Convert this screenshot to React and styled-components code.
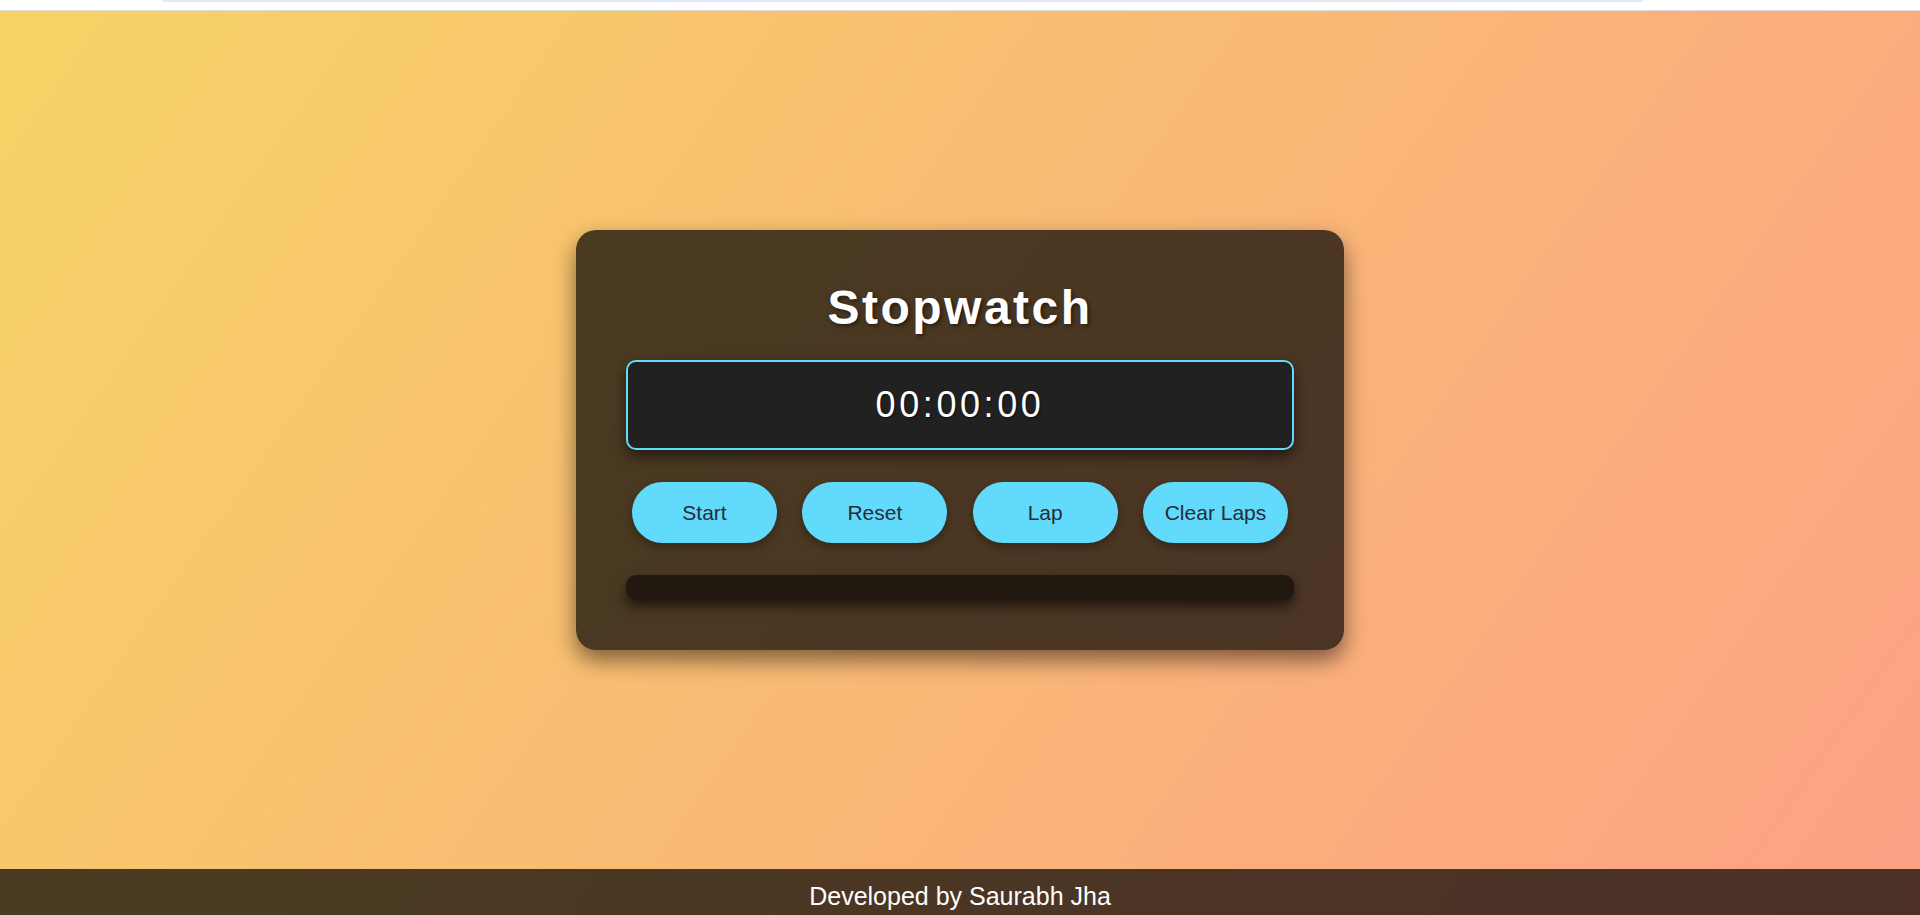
import { useState } from 'react'
import styled, { createGlobalStyle } from 'styled-components'

const GlobalStyle = createGlobalStyle`
	html, body {
		margin: 0;
		padding: 0;
	}
	body {
		font-family: 'Liberation Sans', Arial, sans-serif;
		background: linear-gradient(125deg, #f6d365 0%, #fda085 100%);
		min-height: 100vh;
	}
	* {
		box-sizing: border-box;
	}
`

function pad(n) {
	return String(n).padStart(2, '0')
}

function formatTime(ms) {
	const totalSec = Math.floor(ms / 1000)
	const h = Math.floor(totalSec / 3600)
	const m = Math.floor((totalSec % 3600) / 60)
	const s = totalSec % 60
	return `${pad(h)}:${pad(m)}:${pad(s)}`
}

function App() {
	const [time, setTime] = useState(0)
	const [laps, setLaps] = useState([])

	const buttons = [
		{ label: 'Start', onClick: () => {} },
		{ label: 'Reset', onClick: () => setTime(0) },
		{ label: 'Lap', onClick: () => setLaps([...laps, time]) },
		{ label: 'Clear Laps', onClick: () => setLaps([]) },
	]

	return (
		<>
			<GlobalStyle />
			<TopStrip>
				<TopBar />
			</TopStrip>
			<Main>
				<Card>
					<Title>Stopwatch</Title>
					<Display>{formatTime(time)}</Display>
					<Controls>
						{buttons.map((b) => (
							<Button key={b.label} onClick={b.onClick}>
								{b.label}
							</Button>
						))}
					</Controls>
					<Laps>
						{laps.map((lap, i) => (
							<LapItem key={i}>
								Lap {i + 1}: {formatTime(lap)}
							</LapItem>
						))}
					</Laps>
				</Card>
			</Main>
			<Footer>Developed by Saurabh Jha</Footer>
		</>
	)
}

export default App

const TopStrip = styled.div`
	height: 11px;
	background: #fff;
	border-bottom: 1px solid #dcdcdc;
	padding-left: 162px;
`

const TopBar = styled.div`
	width: 1481px;
	height: 2px;
	background: #e6e8f5;
	border-radius: 0 0 3px 3px;
`

const Main = styled.main`
	height: 858px;
	display: flex;
	align-items: center;
	justify-content: center;
`

const Card = styled.div`
	width: 768px;
	padding: 50px;
	border-radius: 20px;
	background: rgba(0, 0, 0, 0.7);
	box-shadow: 0 10px 22px rgba(0, 0, 0, 0.5);
	text-align: center;
`

const Title = styled.h1`
	margin: 0 0 25px;
	font-size: 48px;
	font-weight: bold;
	letter-spacing: 2.5px;
	color: #fff;
	line-height: 55px;
	text-shadow: 2px 2px 4px rgba(0, 0, 0, 0.5);
`

const Display = styled.div`
	height: 90px;
	display: flex;
	align-items: center;
	justify-content: center;
	background: #212121;
	border: 2px solid #61dafb;
	border-radius: 10px;
	box-shadow: 0 6px 14px rgba(0, 0, 0, 0.55);
	color: #fff;
	font-size: 36px;
	letter-spacing: 3.6px;
	text-shadow: 1px 1px 2px rgba(0, 0, 0, 0.6);
`

const Controls = styled.div`
	display: flex;
	justify-content: space-between;
	padding: 0 6px;
	margin: 32px 0;
`

const Button = styled.button`
	width: 145px;
	height: 61px;
	border: none;
	border-radius: 31px;
	background: #61dafb;
	color: #282c34;
	font-family: 'Liberation Sans', Arial, sans-serif;
	font-size: 21px;
	cursor: pointer;
	box-shadow: 0 4px 8px rgba(0, 0, 0, 0.3);
`

const Laps = styled.ul`
	list-style: none;
	margin: 0;
	padding: 0;
	min-height: 25px;
	border-radius: 10px;
	background: rgba(0, 0, 0, 0.55);
	box-shadow: 0 6px 12px rgba(0, 0, 0, 0.6);
`

const LapItem = styled.li`
	color: #fff;
	font-size: 18px;
	padding: 4px 10px;
`

const Footer = styled.footer`
	padding: 13px 0;
	background: rgba(0, 0, 0, 0.7);
	color: #fff;
	font-size: 25px;
	text-align: center;
`
